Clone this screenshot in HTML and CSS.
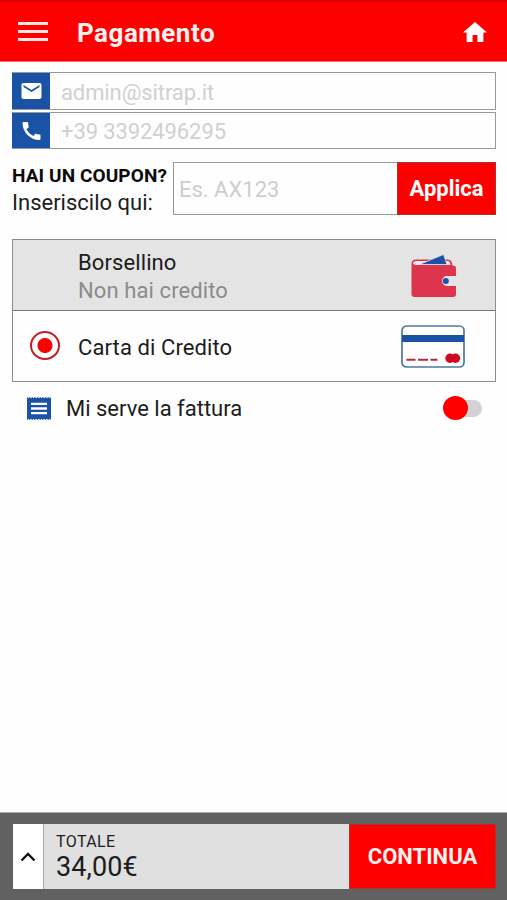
FILE: index.html
```html
<!DOCTYPE html>
<html lang="it">
<head>
  <meta charset="UTF-8">
  <meta name="viewport" content="width=device-width, initial-scale=1.0">
  <title>Pagamento</title>
  <link rel="stylesheet" href="styles.css">
</head>
<body>

  <header class="header">
    <div class="menu-btn"><span></span><span></span><span></span></div>
    <h1 class="header-title">Pagamento</h1>
    <svg class="home-icon" viewBox="2 3 20 17" preserveAspectRatio="none"><path d="M10 20v-6h4v6h5v-8h3L12 3 2 12h3v8z"/></svg>
  </header>

  <main class="content">
    <!-- Contatti -->
    <div class="field">
      <div class="field-icon">
        <svg viewBox="0 0 24 24"><path d="M20 4H4c-1.1 0-2 .9-2 2v12c0 1.1.9 2 2 2h16c1.1 0 2-.9 2-2V6c0-1.1-.9-2-2-2zm0 4l-8 5-8-5V6l8 5 8-5v2z"/></svg>
      </div>
      <span class="field-text">admin@sitrap.it</span>
    </div>
    <div class="field">
      <div class="field-icon">
        <svg viewBox="0 0 24 24"><path d="M20.01 15.38c-1.23 0-2.42-.2-3.53-.56-.35-.12-.74-.03-1.01.24l-1.57 1.97c-2.83-1.35-5.48-3.9-6.89-6.83l1.95-1.66c.27-.28.35-.67.24-1.02-.37-1.11-.56-2.3-.56-3.53 0-.54-.45-.99-.99-.99H4.19C3.65 3 3 3.24 3 3.99 3 13.28 10.73 21 20.01 21c.71 0 .99-.63.99-1.18v-3.45c0-.54-.45-.99-.99-.99z"/></svg>
      </div>
      <span class="field-text">+39 3392496295</span>
    </div>

    <!-- Coupon -->
    <div class="coupon">
      <div class="coupon-label">
        <strong>HAI UN COUPON?</strong>
        <span>Inseriscilo qui:</span>
      </div>
      <div class="coupon-input">Es. AX123</div>
      <button class="coupon-btn">Applica</button>
    </div>

    <!-- Metodi di pagamento -->
    <div class="methods">
      <div class="method disabled">
        <div class="method-text">
          <span>Borsellino</span>
          <span class="note">Non hai credito</span>
        </div>
        <svg class="wallet-icon" viewBox="0 0 46 44">
          <path class="wallet-body" d="M.5 10Q.5 5.500 5 5.500H37q4 0 4.500 6H42q3 0 3 3V22h-9a4.800 4.800 0 0 0 0 10H45v8q0 3-3 3H3.500q-3 0-3-3z"/>
          <path class="wallet-pocket" d="M5 7h32q2 0 2.500 4H5q-3-.5-3-2t3-2z"/>
          <path class="wallet-paper" d="M8.500 10.500L32.500.5l3.500 10z"/>
          <circle class="wallet-button" cx="34.800" cy="27" r="3"/>
        </svg>
      </div>
      <div class="method">
        <div class="radio"></div>
        <div class="method-text">
          <span>Carta di Credito</span>
        </div>
        <svg class="card-icon" viewBox="0 0 64 43">
          <rect class="card-outline" x="1" y="1" width="62" height="41" rx="4.500"/>
          <path class="card-band" d="M1 10h62v7H1z"/>
          <path class="card-digits" d="M5.500 34.800h9M17 34.800h10M29.500 34.800h7"/>
          <circle class="card-logo" cx="49" cy="33.200" r="4.700"/>
          <circle class="card-logo" cx="54.500" cy="33.200" r="4.700"/>
        </svg>
      </div>
    </div>

    <!-- Fattura -->
    <div class="invoice">
      <svg class="invoice-icon" viewBox="3 2 18 20" preserveAspectRatio="none"><path d="M18 17H6v-2h12v2zm0-4H6v-2h12v2zm0-4H6V7h12v2zM3 22l1-1 1 1 1-1 1 1 1-1 1 1 1-1 1 1 1-1 1 1 1-1 1 1 1-1 1 1 1-1 1 1 1-1 1 1V2l-1 1-1-1-1 1-1-1-1 1-1-1-1 1-1-1-1 1-1-1-1 1-1-1-1 1-1-1-1 1-1-1-1 1-1-1z"/></svg>
      <span class="invoice-text">Mi serve la fattura</span>
      <div class="switch"></div>
    </div>
  </main>

  <footer class="footer">
    <div class="expand-btn">
      <svg viewBox="0 0 16 10"><path d="M1.500 8.500L8 2l6.500 6.500"/></svg>
    </div>
    <div class="total">
      <span class="total-label">TOTALE</span>
      <span class="total-value">34,00€</span>
    </div>
    <button class="continue-btn">CONTINUA</button>
  </footer>

</body>
</html>
```
FILE: styles.css
```css
* {
  box-sizing: border-box;
}

body {
  margin: 0;
  height: 900px;
  display: flex;
  flex-direction: column;
  background: #fefefe;
  color: #1c1c1c;
  font-family: Roboto, sans-serif;
  font-size: 22px;
  white-space: nowrap;
}

svg {
  display: block;
}

button {
  font-family: inherit;
  padding: 0;
  border: 1px solid #a33;
  background: #fe0000;
  color: #fff;
  font-weight: bold;
}

/* Testata */
.header {
  height: 62px;
  display: flex;
  align-items: center;
  padding: 0 20px 0 18px;
  border-top: 2px solid #d90000;
  border-bottom: 1px solid #f66;
  background: #fe0000;
}

.menu-btn {
  width: 30px;
  display: flex;
  flex-direction: column;
  gap: 5px;
}

.menu-btn span {
  height: 3px;
  background: #ffe4e4;
}

.header-title {
  flex: 1;
  margin: 3px 0 0 29px;
  color: #fff0f0;
  font-size: 26px;
  line-height: 30px;
  letter-spacing: 0.5px;
}

.home-icon {
  width: 24px;
  height: 20px;
  fill: #fff;
}

.content {
  flex: 1;
  padding: 10px 11px 0 12px;
}

/* Campi contatto */
.field {
  height: 38px;
  display: flex;
  align-items: center;
  margin-bottom: 2px;
  border: 1px solid #999;
}

.field + .field {
  height: 37px;
}

.field-icon {
  width: 38px;
  height: 100%;
  margin-left: -1px;
  display: flex;
  align-items: center;
  justify-content: center;
  background: #1a52a5;
}

.field-icon svg {
  width: 25px;
  height: 24px;
  fill: #fff;
}

.field-text {
  margin-left: 11px;
  padding-top: 2px;
  color: #d0d0d0;
  letter-spacing: -0.1px;
}

/* Coupon */
.coupon {
  height: 53px;
  display: flex;
  margin-top: 13px;
}

.coupon-label {
  width: 161px;
  display: flex;
  flex-direction: column;
  padding-top: 1px;
  line-height: 27px;
}

.coupon-label strong {
  color: #0a0a0a;
  font-size: 19px;
  line-height: 26px;
  letter-spacing: 0.1px;
}

.coupon-input {
  flex: 1;
  padding-left: 5px;
  border: 1px solid #999;
  border-right: 0;
  color: #cdcdcd;
  line-height: 54px;
}

.coupon-btn {
  width: 99px;
  font-size: 22px;
}

/* Metodi di pagamento */
.methods {
  margin-top: 24px;
  border: 1px solid #8c8c8c;
}

.method {
  height: 70px;
  display: flex;
  align-items: center;
  padding-left: 17px;
}

.method.disabled {
  height: 71px;
  padding-left: 65px;
  border-bottom: 1px solid #777;
  background: #e4e4e4;
}

.method-text {
  flex: 1;
  display: flex;
  flex-direction: column;
  padding-top: 3px;
  line-height: 28px;
  letter-spacing: 0.1px;
}

.note {
  color: #8b8b8b;
}

.radio {
  width: 30px;
  height: 29px;
  margin: -1px 18px 0 0;
  border: 2px solid #c71c24;
  border-radius: 50%;
  background: radial-gradient(circle, #fe0000 7px, transparent 8px);
}

.wallet-icon {
  width: 46px;
  height: 44px;
  margin: 1px 38px 0 0;
}

.wallet-body {
  fill: #dc354d;
}

.wallet-pocket {
  fill: #eee;
}

.wallet-paper {
  fill: #1a52a5;
  stroke: #e9e9ee;
  stroke-width: 0.7;
}

.wallet-button {
  fill: #1a52a5;
}

.card-icon {
  width: 64px;
  height: 43px;
  margin-right: 30px;
}

.card-outline {
  fill: none;
  stroke: #4e789e;
  stroke-width: 1.7;
}

.card-band {
  fill: #1a52a5;
}

.card-digits {
  stroke: #bd2640;
  stroke-width: 2;
}

.card-logo {
  fill: #cf0a20;
}

/* Fattura */
.invoice {
  height: 52px;
  display: flex;
  align-items: center;
  padding: 0 14px 0 15px;
}

.invoice-icon {
  width: 24px;
  height: 23px;
  fill: #1a52a5;
}

.invoice-text {
  flex: 1;
  margin-left: 15px;
}

.switch {
  width: 36px;
  height: 17px;
  display: flex;
  align-items: center;
  border-radius: 9px;
  background: #d3d3d5;
}

.switch::before {
  content: "";
  width: 25px;
  height: 24px;
  margin-left: -3px;
  flex-shrink: 0;
  border-radius: 50%;
  background: #fe0000;
}

/* Barra totale */
.footer {
  height: 88px;
  display: flex;
  padding: 11px 11px 11px 13px;
  border-top: 1px solid #aaa;
  background: #616161;
}

.expand-btn {
  width: 31px;
  display: flex;
  align-items: center;
  justify-content: center;
  border-right: 1px solid #aaa;
  background: #fff;
}

.expand-btn svg {
  width: 16px;
  height: 10px;
  fill: none;
  stroke: #111;
  stroke-width: 2.3;
}

.total {
  flex: 1;
  display: flex;
  flex-direction: column;
  padding: 7px 0 0 12px;
  background: #e0e0e0;
}

.total-label {
  font-size: 16px;
  line-height: 21px;
  letter-spacing: 0.4px;
}

.total-value {
  font-size: 27px;
  line-height: 30px;
  letter-spacing: 0.1px;
}

.continue-btn {
  width: 147px;
  color: #fff0f0;
  font-size: 22px;
}
```
